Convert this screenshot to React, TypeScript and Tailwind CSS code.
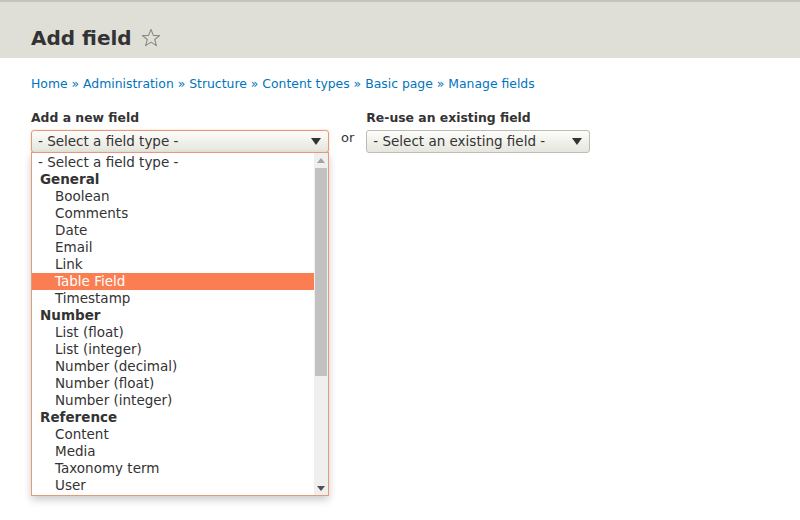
import React from "react";

const font = { fontFamily: '"DejaVu Sans", Verdana, sans-serif' };

type Row = { label: string; kind: "top" | "group" | "opt"; active?: boolean };

const rows: Row[] = [
  { label: "- Select a field type -", kind: "top" },
  { label: "General", kind: "group" },
  { label: "Boolean", kind: "opt" },
  { label: "Comments", kind: "opt" },
  { label: "Date", kind: "opt" },
  { label: "Email", kind: "opt" },
  { label: "Link", kind: "opt" },
  { label: "Table Field", kind: "opt", active: true },
  { label: "Timestamp", kind: "opt" },
  { label: "Number", kind: "group" },
  { label: "List (float)", kind: "opt" },
  { label: "List (integer)", kind: "opt" },
  { label: "Number (decimal)", kind: "opt" },
  { label: "Number (float)", kind: "opt" },
  { label: "Number (integer)", kind: "opt" },
  { label: "Reference", kind: "group" },
  { label: "Content", kind: "opt" },
  { label: "Media", kind: "opt" },
  { label: "Taxonomy term", kind: "opt" },
  { label: "User", kind: "opt" },
];

function Caret() {
  return (
    <svg width="10" height="7" viewBox="0 0 10 7">
      <path d="M0 0 L10 0 L5 7 Z" fill="#333" />
    </svg>
  );
}

function Star() {
  return (
    <svg width="20" height="20" viewBox="0 0 20 20">
      <path
        d="M10 1.5 L12.4 7.4 L18.6 7.6 L13.7 11.5 L15.4 17.6 L10 14.1 L4.6 17.6 L6.3 11.5 L1.4 7.6 L7.6 7.4 Z"
        fill="none"
        stroke="#8a8a80"
        strokeWidth="1.1"
        strokeLinejoin="round"
      />
    </svg>
  );
}

export default function App() {
  const crumbs = ["Home", "Administration", "Structure", "Content types", "Basic page", "Manage fields"];
  return (
    <div className="w-[800px] h-[520px] bg-white overflow-hidden text-[#333]" style={font}>
      <div className="h-[58px] bg-[#dfdfd7] border-t-2 border-[#c4c4bc] flex items-end pl-[31px] pb-[7px]">
        <h1 className="text-[20px] font-bold leading-none text-[#333] flex items-center gap-[9px] pb-[3px]">
          <span>Add field</span>
          <Star />
        </h1>
      </div>
      <div className="pl-[31px] pt-[18px] text-[12.4px] leading-[16px] text-[#0074bd]">
        {crumbs.map((c, i) => (
          <span key={c}>
            {i > 0 && <span className="text-[#0074bd]"> » </span>}
            {c}
          </span>
        ))}
      </div>
      <div className="pl-[31px] pt-[18px] flex items-start">
        <div className="flex flex-col">
          <div className="text-[12.4px] font-bold leading-[16px] mb-[4px]">Add a new field</div>
          <div className="relative">
            <div className="w-[298px] h-[23px] rounded-[3px] border border-[#e59a7c] bg-gradient-to-b from-[#fcfcfa] to-[#e6e6de] flex items-center justify-between pl-[6px] pr-[7px] text-[13.5px] shadow-[0_0_2px_rgba(229,120,80,0.4)]">
              <span>- Select a field type -</span>
              <Caret />
            </div>
            <div className="absolute left-0 top-[22px] w-[298px] h-[344px] border border-[#e59a7c] bg-white flex shadow-[0_4px_8px_rgba(0,0,0,0.2)] z-10">
              <div className="flex-1 flex flex-col text-[13.5px] pt-[1px]">
                {rows.map((r) => (
                  <div
                    key={r.label}
                    className={
                      "h-[17px] leading-[17px] whitespace-nowrap " +
                      (r.kind === "top"
                        ? "pl-[6px]"
                        : r.kind === "group"
                        ? "pl-[8px] font-bold"
                        : "pl-[23px]") +
                      (r.active ? " bg-[#fb7e52] text-white" : "")
                    }
                  >
                    {r.label}
                  </div>
                ))}
              </div>
              <div className="w-[14px] bg-[#efefef] flex flex-col items-center">
                <div className="h-[14px] flex items-center justify-center">
                  <svg width="8" height="5" viewBox="0 0 8 5">
                    <path d="M0 5 L8 5 L4 0 Z" fill="#a3a3a3" />
                  </svg>
                </div>
                <div className="w-[12px] h-[208px] bg-[#c1c1c1] mt-[1px]" />
                <div className="flex-1" />
                <div className="h-[14px] flex items-center justify-center">
                  <svg width="8" height="5" viewBox="0 0 8 5">
                    <path d="M0 0 L8 0 L4 5 Z" fill="#505050" />
                  </svg>
                </div>
              </div>
            </div>
          </div>
        </div>
        <div className="text-[13px] leading-[16px] ml-[12px] mt-[20px]">or</div>
        <div className="flex flex-col ml-[12px]">
          <div className="text-[12.4px] font-bold leading-[16px] mb-[4px]">Re-use an existing field</div>
          <div className="w-[224px] h-[23px] rounded-[3px] border border-[#bdbdb5] bg-gradient-to-b from-[#fcfcfa] to-[#e6e6de] flex items-center justify-between pl-[6px] pr-[7px] text-[13.5px]">
            <span>- Select an existing field -</span>
            <Caret />
          </div>
        </div>
      </div>
    </div>
  );
}
